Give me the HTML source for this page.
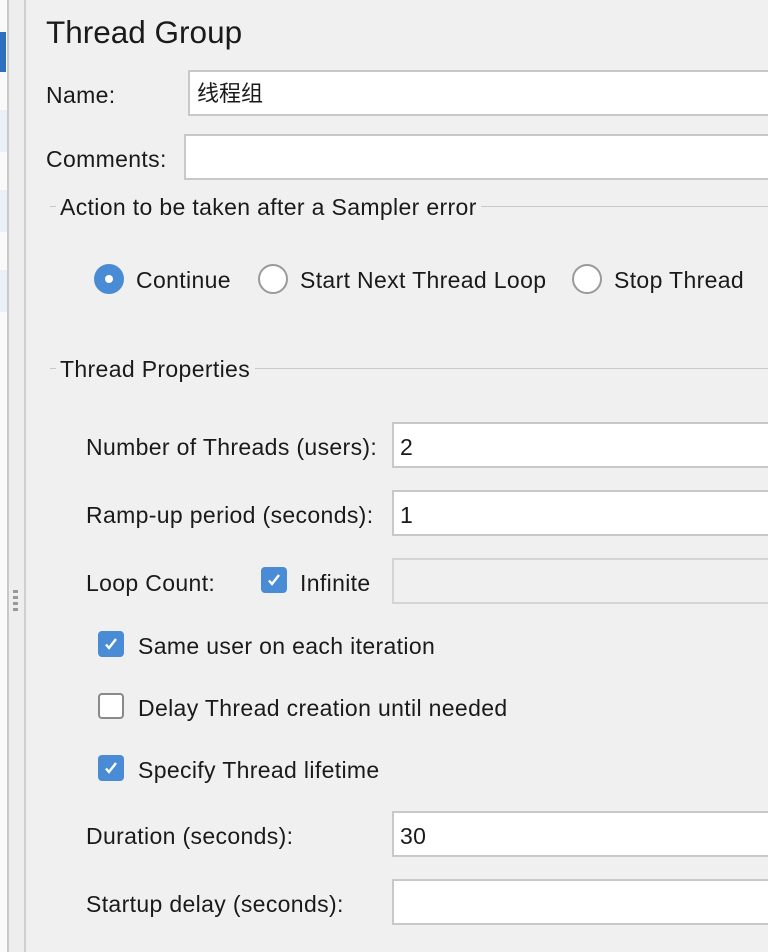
<!DOCTYPE html>
<html><head><meta charset="utf-8"><style>
body{margin:0;width:768px;height:952px;background:#f0f0f0;font-family:"Liberation Sans","Noto Sans CJK SC",sans-serif;color:#1a1a1a;position:relative;overflow:hidden;font-size:23px;letter-spacing:0.35px}
.a{position:absolute;white-space:nowrap;line-height:26px}
.inp{position:absolute;background:#fff;border:2px solid #c8c8c8;box-sizing:border-box}
.cb{position:absolute;width:26px;height:26px;border-radius:4px;background:#4a8bd6;box-sizing:border-box}
.cb svg{position:absolute;left:5px;top:5px}
.cbo{background:#fff;border:2px solid #8a8a8a}
.rad{position:absolute;width:30px;height:30px;border-radius:50%;background:#fff;border:2px solid #9a9a9a;box-sizing:border-box}
.line{position:absolute;height:1px;background:#c8c8c8}
</style></head><body>
<div class="a" style="left:0;top:0;width:7px;height:952px;background:#fafafa"></div>
<div class="a" style="left:0;top:110px;width:7px;height:42px;background:#eaf0f8"></div>
<div class="a" style="left:0;top:190px;width:7px;height:42px;background:#eaf0f8"></div>
<div class="a" style="left:0;top:270px;width:7px;height:42px;background:#eaf0f8"></div>
<div class="a" style="left:0;top:32px;width:6px;height:40px;background:#2f6fc0"></div>
<div class="a" style="left:7px;top:0;width:2px;height:952px;background:#c8c8c8"></div>
<div class="a" style="left:9px;top:0;width:15px;height:952px;background:#eeeeee"></div>
<div class="a" style="left:24px;top:0;width:2px;height:952px;background:#cfcfcf"></div>
<div class="a" style="left:13px;top:590px;width:5px;height:22px;background:repeating-linear-gradient(#999 0 3px,transparent 3px 6px)"></div>

<div class="a" style="left:46px;top:19px;font-size:31.5px;letter-spacing:0">Thread Group</div>
<div class="a" style="left:46px;top:82px">Name:</div>
<div class="inp" style="left:188px;top:70px;width:600px;height:46px"></div>
<div class="a" style="left:197px;top:81px;letter-spacing:0;font-size:22px">线程组</div>
<div class="a" style="left:46px;top:146px">Comments:</div>
<div class="inp" style="left:184px;top:134px;width:600px;height:46px"></div>

<div class="line" style="left:50px;top:206px;width:6px"></div>
<div class="a" style="left:60px;top:194px">Action to be taken after a Sampler error</div>
<div class="line" style="left:481px;top:206px;width:287px"></div>
<div class="rad" style="left:94px;top:264px;background:#4a8bd6;border-color:#4a8bd6"><div style="position:absolute;left:9px;top:9px;width:8px;height:8px;border-radius:50%;background:#fff"></div></div>
<div class="a" style="left:136px;top:267px">Continue</div>
<div class="rad" style="left:258px;top:264px"></div>
<div class="a" style="left:300px;top:267px">Start Next Thread Loop</div>
<div class="rad" style="left:572px;top:264px"></div>
<div class="a" style="left:614px;top:267px">Stop Thread</div>

<div class="line" style="left:50px;top:368px;width:6px"></div>
<div class="a" style="left:60px;top:356px">Thread Properties</div>
<div class="line" style="left:255px;top:368px;width:513px"></div>

<div class="a" style="left:86px;top:434px">Number of Threads (users):</div>
<div class="inp" style="left:392px;top:422px;width:400px;height:46px"></div>
<div class="a" style="left:400px;top:434px">2</div>
<div class="a" style="left:86px;top:502px">Ramp-up period (seconds):</div>
<div class="inp" style="left:392px;top:490px;width:400px;height:46px"></div>
<div class="a" style="left:400px;top:502px">1</div>
<div class="a" style="left:86px;top:570px">Loop Count:</div>
<div class="cb" style="left:261px;top:567px"><svg width="16" height="16" viewBox="0 0 16 16"><path d="M3 8.5l3 3.5 7-9" stroke="#fff" stroke-width="2.4" fill="none"/></svg></div>
<div class="a" style="left:300px;top:570px">Infinite</div>
<div class="inp" style="left:392px;top:558px;width:400px;height:46px;background:#f0f0f0;border-color:#d4d4d4"></div>

<div class="cb" style="left:98px;top:631px"><svg width="16" height="16" viewBox="0 0 16 16"><path d="M3 8.5l3 3.5 7-9" stroke="#fff" stroke-width="2.4" fill="none"/></svg></div>
<div class="a" style="left:138px;top:633px">Same user on each iteration</div>
<div class="cb cbo" style="left:98px;top:693px"></div>
<div class="a" style="left:138px;top:695px">Delay Thread creation until needed</div>
<div class="cb" style="left:98px;top:755px"><svg width="16" height="16" viewBox="0 0 16 16"><path d="M3 8.5l3 3.5 7-9" stroke="#fff" stroke-width="2.4" fill="none"/></svg></div>
<div class="a" style="left:138px;top:757px">Specify Thread lifetime</div>

<div class="a" style="left:86px;top:823px">Duration (seconds):</div>
<div class="inp" style="left:392px;top:811px;width:400px;height:46px"></div>
<div class="a" style="left:400px;top:823px">30</div>
<div class="a" style="left:86px;top:891px">Startup delay (seconds):</div>
<div class="inp" style="left:392px;top:879px;width:400px;height:46px"></div>
</body></html>
